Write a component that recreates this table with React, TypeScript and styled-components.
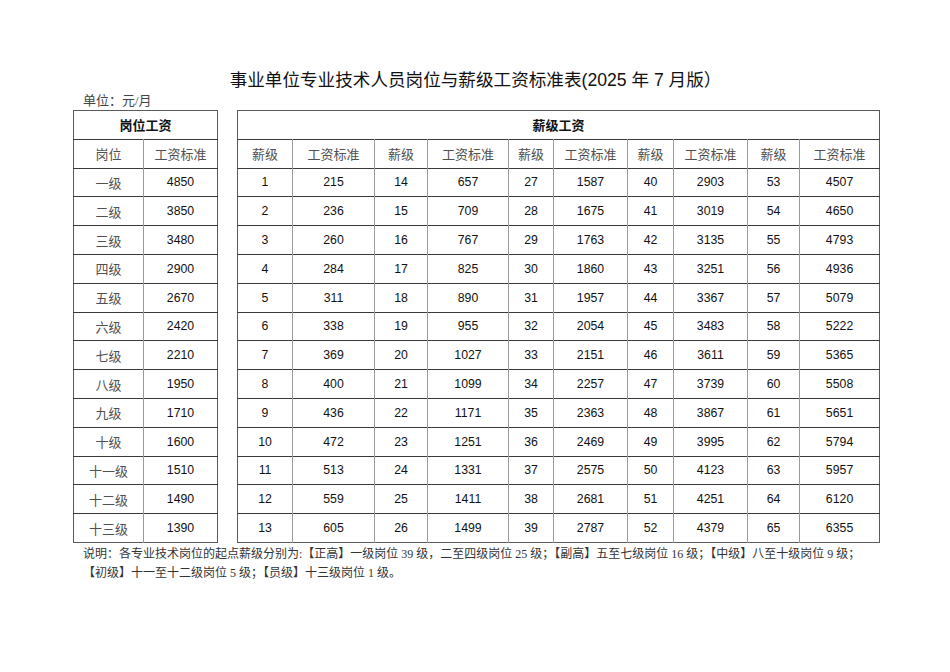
import React from 'react';
import styled, { createGlobalStyle } from 'styled-components';

const GlobalStyle = createGlobalStyle`
  html, body {
    margin: 0;
    padding: 0;
    background: #ffffff;
  }
`;

const CJK_SANS = `"Liberation Sans", "Noto Sans CJK SC", sans-serif`;
const CJK_SERIF = `"Liberation Serif", "Noto Sans CJK SC", serif`;

const Page = styled.div`
  width: 950px;
  height: 672px;
  box-sizing: border-box;
  padding: 69px 72px 0 73px;
  color: #000;
`;

const Title = styled.h1`
  margin: 0;
  font-family: ${CJK_SANS};
  font-size: 17.6px;
  font-weight: 400;
  line-height: 23px;
  text-align: center;
  color: #111;
`;

const Unit = styled.div`
  margin: 0 0 1px 10px;
  font-family: ${CJK_SERIF};
  font-size: 13px;
  line-height: 17px;
  color: #444;
`;

const Tables = styled.div`
  display: flex;
  gap: 19px;
  align-items: flex-start;
`;

const Table = styled.table<{ $width: number }>`
  width: ${(p) => p.$width}px;
  border-collapse: collapse;
  table-layout: fixed;
  border: 1.5px solid #5a5a5a;
`;

const Row = styled.tr`
  height: 28.8px;
  border-bottom: 1px solid #3a3a3a;

  &:last-child {
    border-bottom: none;
  }
`;

const GroupHead = styled.th`
  font-family: ${CJK_SANS};
  font-size: 13px;
  font-weight: 700;
  color: #111;
  text-align: center;
  padding: 0;
`;

const Label = styled.td`
  font-family: ${CJK_SERIF};
  font-size: 13px;
  color: #505050;
  text-align: center;
  padding: 0;
  border-left: 1.5px solid #9a9a9a;

  &:first-child {
    border-left: none;
  }
`;

const Num = styled.td`
  font-family: "Liberation Sans", Arial, sans-serif;
  font-size: 12.3px;
  color: #111;
  text-align: center;
  padding: 0;
  border-left: 1.5px solid #9a9a9a;

  &:first-child {
    border-left: none;
  }
`;

const Note = styled.p`
  margin: 2px 0 0 10px;
  font-family: ${CJK_SERIF};
  font-size: 12px;
  line-height: 19.5px;
  color: #333;
  white-space: nowrap;
`;

const posts = [
  ['一级', 4850],
  ['二级', 3850],
  ['三级', 3480],
  ['四级', 2900],
  ['五级', 2670],
  ['六级', 2420],
  ['七级', 2210],
  ['八级', 1950],
  ['九级', 1710],
  ['十级', 1600],
  ['十一级', 1510],
  ['十二级', 1490],
  ['十三级', 1390],
];

const pay = [
  215, 236, 260, 284, 311, 338, 369, 400, 436, 472, 513, 559, 605,
  657, 709, 767, 825, 890, 955, 1027, 1099, 1171, 1251, 1331, 1411, 1499,
  1587, 1675, 1763, 1860, 1957, 2054, 2151, 2257, 2363, 2469, 2575, 2681, 2787,
  2903, 3019, 3135, 3251, 3367, 3483, 3611, 3739, 3867, 3995, 4123, 4251, 4379,
  4507, 4650, 4793, 4936, 5079, 5222, 5365, 5508, 5651, 5794, 5957, 6120, 6355,
];

const rightCols = [55, 82, 53, 81, 45, 74, 46, 74, 52, 80];

const App: React.FC = () => {
  return (
    <Page>
      <GlobalStyle />
      <Title>事业单位专业技术人员岗位与薪级工资标准表(2025 年 7 月版）</Title>
      <Unit>单位：元/月</Unit>

      <Tables>
        <Table $width={144}>
          <colgroup>
            <col style={{ width: 70 }} />
            <col style={{ width: 74 }} />
          </colgroup>
          <tbody>
            <Row>
              <GroupHead colSpan={2}>岗位工资</GroupHead>
            </Row>
            <Row>
              <Label>岗位</Label>
              <Label>工资标准</Label>
            </Row>
            {posts.map(([name, value]) => (
              <Row key={name}>
                <Label>{name}</Label>
                <Num>{value}</Num>
              </Row>
            ))}
          </tbody>
        </Table>

        <Table $width={642}>
          <colgroup>
            {rightCols.map((w, i) => (
              <col key={i} style={{ width: w }} />
            ))}
          </colgroup>
          <tbody>
            <Row>
              <GroupHead colSpan={10}>薪级工资</GroupHead>
            </Row>
            <Row>
              {[0, 1, 2, 3, 4].map((g) => (
                <React.Fragment key={g}>
                  <Label>薪级</Label>
                  <Label>工资标准</Label>
                </React.Fragment>
              ))}
            </Row>
            {Array.from({ length: 13 }).map((_, r) => (
              <Row key={r}>
                {[0, 1, 2, 3, 4].map((g) => {
                  const level = g * 13 + r + 1;
                  return (
                    <React.Fragment key={g}>
                      <Num>{level}</Num>
                      <Num>{pay[level - 1]}</Num>
                    </React.Fragment>
                  );
                })}
              </Row>
            ))}
          </tbody>
        </Table>
      </Tables>

      <Note>
        说明：各专业技术岗位的起点薪级分别为:【正高】一级岗位 39 级，二至四级岗位 25 级；【副高】五至七级岗位 16 级；【中级】八至十级岗位 9 级；
        <br />
        【初级】十一至十二级岗位 5 级；【员级】十三级岗位 1 级。
      </Note>
    </Page>
  );
};

export default App;
